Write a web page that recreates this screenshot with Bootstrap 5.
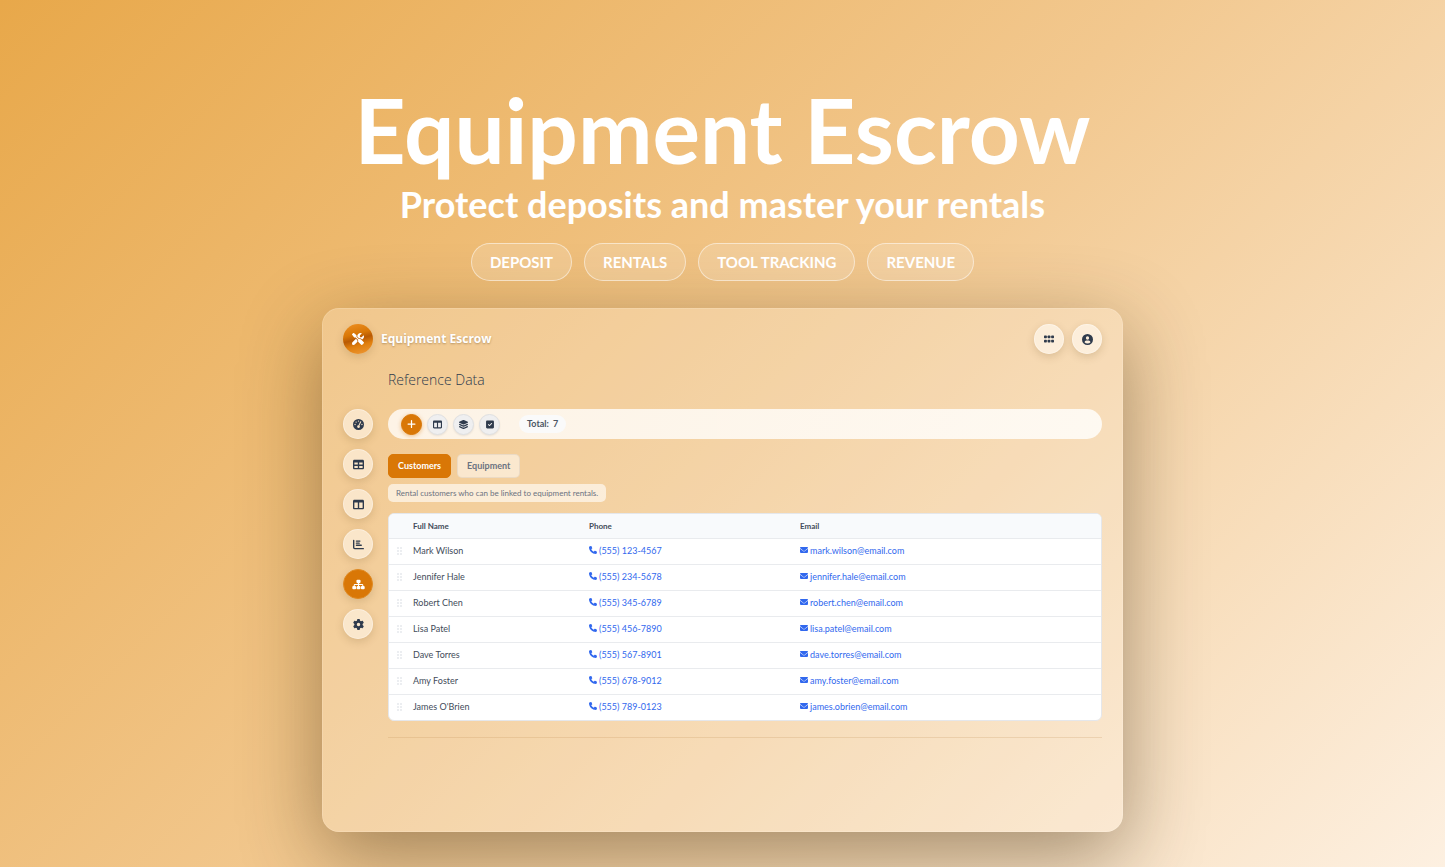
<!DOCTYPE html>
<html lang="en">
<head>
<meta charset="utf-8">
<meta name="viewport" content="width=device-width, initial-scale=1">
<title>Equipment Escrow</title>
<link href="https://cdn.jsdelivr.net/npm/bootstrap@5.3.0/dist/css/bootstrap.min.css" rel="stylesheet">
<style>
  :root { --ink: #2f3b4d; --accent: #d97706; --link: #3168ee; }
  body {
    min-height: 100vh; color: var(--ink); font-family: Lato, "Open Sans", sans-serif; font-size: 9px; line-height: 14px;
    background: linear-gradient(135deg, #e8a84a 0%, #f2c88f 50%, #fdf0e1 100%) no-repeat;
  }
  .hero { padding-top: 77px; color: #fff; }
  .hero h1 { font-size: 89px; line-height: 106px; font-weight: 700; }
  .hero p { font-size: 36px; line-height: 42px; font-weight: 700; }
  .tags { gap: 12px; margin-top: 18px; }
  .tag { height: 38px; padding: 0 18px; border: 1px solid rgba(255,255,255,.5); background: rgba(255,255,255,.16); font-size: 15px; font-weight: 700; }
  .app {
    max-width: 801px; margin-top: 27px; padding: 15px 20px 93px; border: 1px solid rgba(255,255,255,.3); border-radius: 17px;
    background: rgba(255,255,255,.2); background-clip: padding-box; box-shadow: 0 24px 80px rgba(60,40,10,.45);
  }
  .app svg { fill: currentColor; display: block; }
  .round { width: 30px; height: 30px; border-radius: 50%; padding: 0; border: 1px solid rgba(255,255,255,.35); color: var(--ink); background: rgba(255,248,238,.68); box-shadow: 0 3px 8px rgba(90,60,20,.17); display: grid; place-items: center; }
  .side .round { background: rgba(255,248,238,.58); }
  .side .round.current { background: var(--accent); color: #fff; border-color: #e08a22; }
  .logo { background: linear-gradient(165deg, #e98a1c 10%, #d97706 35%, #b85a04 50%, #e07f0e 68%, #ee9a3a 100%); color: #fff; border: 0; }
  .brand { font-family: "Open Sans", sans-serif; font-size: 12px; line-height: 16px; font-weight: 700; color: #fff; text-shadow: 0 1px 2px rgba(80,50,10,.35); }
  .page-title { font-family: "Open Sans", sans-serif; font-size: 14px; line-height: 20px; font-weight: 300; margin: 16px 0 19px; }
  .body-row { gap: 15px; }
  .side { width: 30px; gap: 10px; padding-top: 55px; }
  .toolbar { height: 30px; border-radius: 15px; padding: 0 13px; gap: 5px; background: linear-gradient(to right, rgba(255,250,244,.85), rgba(255,253,249,.88)); }
  .tool { width: 21px; height: 21px; border-radius: 50%; border: 1px solid #dfe0e2; background: #efeff0; color: var(--ink); padding: 0; display: grid; place-items: center; box-shadow: 0 1px 2px rgba(0,0,0,.08); }
  .tool.primary { background: var(--accent); border-color: var(--accent); color: #fff; box-shadow: 0 1px 4px rgba(217,119,6,.45); }
  .total { height: 18px; margin-left: 14px; padding: 0 8px; border-radius: 9px; background: #fafafa; color: #4b5563; }
  .tabs { gap: 6px; margin: 15px 0 6px; }
  .tab { height: 24px; padding: 0 9px; border: 1px solid rgba(225,210,190,.6); border-radius: 5px; background: rgba(255,249,240,.6); color: #6b7280; font-weight: 700; }
  .tab.active { background: var(--accent); border-color: var(--accent); color: #fff; }
  .hint { height: 18px; padding: 0 8px; border-radius: 5px; background: rgba(255,250,244,.68); color: #6b7280; font-size: 8px; }
  .grid-wrap { margin: 11px 0 16px; border: 1px solid #e5e7eb; border-radius: 6px; overflow: hidden; background: #fff; }
  .grid { width: 100%; table-layout: fixed; color: #434c5a; }
  .grid th, .grid td { height: 26px; padding: 0; border-top: 1px solid #e9ebee; vertical-align: middle; white-space: nowrap; }
  .grid thead th { border-top: 0; height: 24px; background: #f8fafc; font-size: 8px; font-weight: 700; }
  .grid a { color: var(--link); text-decoration: none; display: inline-flex; align-items: center; gap: 2px; }
  .grid a svg { margin-bottom: 2px; }
  .grid .grip { color: #eceef1; padding-left: 8px; }
  .c0 { width: 24px; } .c1 { width: 176px; } .c2 { width: 211px; }
  .rule { border-top: 1px solid rgba(190,140,80,.22); }
</style>
</head>
<body>
<svg class="d-none" aria-hidden="true">
  <symbol id="plus" viewBox="0 0 448 512"><path d="M256 80c0-17.700-14.300-32-32-32s-32 14.300-32 32V224H48c-17.700 0-32 14.300-32 32s14.300 32 32 32H192V432c0 17.700 14.300 32 32 32s32-14.300 32-32V288H400c17.700 0 32-14.300 32-32s-14.300-32-32-32H256V80z"/></symbol>
  <symbol id="columns" viewBox="0 0 512 512"><path d="M0 96C0 60.700 28.700 32 64 32H448c35.300 0 64 28.700 64 64V416c0 35.300-28.700 64-64 64H64c-35.300 0-64-28.700-64-64V96zm64 64V416H224V160H64zm384 0H288V416H448V160z"/></symbol>
  <symbol id="cells" viewBox="0 0 512 512"><path d="M64 256V160H224v96H64zm0 64H224v96H64V320zm224 96V320H448v96H288zM448 256H288V160H448v96zM64 32C28.700 32 0 60.700 0 96V416c0 35.300 28.700 64 64 64H448c35.300 0 64-28.700 64-64V96c0-35.300-28.700-64-64-64H64z"/></symbol>
  <symbol id="layers" viewBox="0 0 512 512"><path d="M232.500 5.200c14.900-6.900 32.100-6.900 47 0l218.600 101c8.500 3.900 13.900 12.400 13.900 21.800s-5.400 17.900-13.900 21.800l-218.600 101c-14.900 6.900-32.100 6.900-47 0L13.900 149.800C5.400 145.800 0 137.300 0 128s5.400-17.900 13.900-21.800L232.500 5.200zM48.100 218.400l164.300 75.900c27.700 12.800 59.600 12.800 87.300 0l164.300-75.900 34.100 15.800c8.500 3.900 13.900 12.400 13.900 21.800s-5.400 17.900-13.900 21.800l-218.600 101c-14.900 6.900-32.100 6.900-47 0L13.900 277.800C5.400 273.800 0 265.300 0 256s5.400-17.900 13.900-21.800l34.100-15.800zM13.900 362.200l34.100-15.800 164.300 75.900c27.700 12.800 59.600 12.800 87.300 0l164.300-75.900 34.100 15.800c8.500 3.900 13.900 12.400 13.900 21.800s-5.400 17.900-13.900 21.800l-218.600 101c-14.900 6.900-32.100 6.900-47 0L13.900 405.800C5.400 401.800 0 393.300 0 384s5.400-17.900 13.900-21.800z"/></symbol>
  <symbol id="check" viewBox="0 0 448 512"><path d="M64 32C28.700 32 0 60.700 0 96V416c0 35.300 28.700 64 64 64H384c35.300 0 64-28.700 64-64V96c0-35.300-28.700-64-64-64H64zM337 209L209 337c-9.400 9.400-24.600 9.400-33.900 0l-64-64c-9.400-9.400-9.400-24.600 0-33.900s24.600-9.400 33.900 0l47 47L303 175c9.400-9.400 24.600-9.400 33.900 0s9.400 24.600 0 33.900z"/></symbol>
  <symbol id="phone" viewBox="0 0 512 512"><path d="M164.900 24.600c-7.700-18.600-28-28.500-47.400-23.200l-88 24C12.100 30.200 0 46 0 64C0 311.400 200.600 512 448 512c18 0 33.800-12.100 38.600-29.500l24-88c5.300-19.400-4.600-39.700-23.200-47.400l-96-40c-16.300-6.800-35.200-2.100-46.300 11.600L304.700 368C234.300 334.700 177.300 277.700 144 207.300L193.300 167c13.700-11.200 18.400-30 11.600-46.300l-40-96z"/></symbol>
  <symbol id="mail" viewBox="0 0 512 512"><path d="M48 64C22 64 0 86 0 112q0 24 19 38L237 314q19 14 38 0L493 150q19-14 19-38c0-26-22-48-48-48zM0 176V384q0 64 64 64H448q64 0 64-64V176L294 339q-38 28-76 0z"/></symbol>
  <symbol id="gear" viewBox="0 0 512 512"><path d="M495.900 166.600c3.200 8.700.5 18.400-6.400 24.600l-43.300 39.400c1.100 8.300 1.700 16.800 1.700 25.400s-.6 17.100-1.700 25.400l43.300 39.400c6.900 6.200 9.600 15.900 6.400 24.600c-4.400 11.900-9.700 23.300-15.800 34.300l-4.700 8.100c-6.600 11-14 21.400-22.100 31.200c-5.900 7.200-15.700 9.600-24.500 6.800l-55.700-17.700c-13.400 10.300-28.200 18.900-44 25.400l-12.500 57.100c-2 9.100-9 16.300-18.200 17.800c-13.800 2.300-28 3.500-42.500 3.500s-28.700-1.200-42.500-3.500c-9.200-1.500-16.200-8.700-18.200-17.800l-12.500-57.100c-15.800-6.500-30.600-15.100-44-25.400L83.100 425.900c-8.800 2.800-18.600.3-24.500-6.800c-8.100-9.800-15.500-20.200-22.100-31.200l-4.700-8.100c-6.100-11-11.400-22.400-15.800-34.300c-3.200-8.700-.5-18.400 6.400-24.600l43.300-39.400C64.600 273.100 64 264.600 64 256s.6-17.100 1.700-25.400L22.400 191.200c-6.900-6.200-9.600-15.900-6.400-24.600c4.400-11.900 9.700-23.300 15.800-34.300l4.700-8.100c6.600-11 14-21.400 22.100-31.200c5.900-7.200 15.700-9.600 24.500-6.800l55.700 17.700c13.400-10.300 28.200-18.900 44-25.400l12.500-57.100c2-9.100 9-16.300 18.200-17.800C227.300 1.200 241.500 0 256 0s28.700 1.200 42.500 3.500c9.200 1.500 16.200 8.700 18.200 17.800l12.500 57.100c15.800 6.500 30.600 15.100 44 25.400l55.700-17.700c8.800-2.800 18.600-.3 24.500 6.800c8.100 9.800 15.500 20.200 22.100 31.200l4.700 8.100c6.100 11 11.400 22.400 15.800 34.300zM256 336a80 80 0 1 0 0-160 80 80 0 1 0 0 160z"/></symbol>
  <symbol id="tools" viewBox="0 0 512 512"><path d="M78.600 5C69.100-2.400 55.600-1.500 47 7L7 47c-8.500 8.500-9.400 22-2.100 31.600l80 104c4.500 5.900 11.600 9.400 19 9.400h54.100l109 109c-14.700 29-10 65.400 14.300 89.600l112 112c12.500 12.500 32.800 12.500 45.300 0l64-64c12.500-12.500 12.500-32.800 0-45.300l-112-112c-24.200-24.200-60.600-29-89.600-14.300l-109-109V104c0-7.500-3.500-14.500-9.400-19L78.600 5zM19.900 396.100C7.200 408.800 0 426.100 0 444.100C0 481.600 30.400 512 67.900 512c18 0 35.300-7.200 48-19.900L233.700 374.300c-7.800-20.900-9-43.600-3.600-65.100l-61.700-61.700L19.900 396.100zM512 144c0-10.500-1.100-20.700-3.200-30.500c-2.400-11.200-16.100-14.100-24.200-6l-63.900 63.900c-3 3-7.100 4.700-11.300 4.700H352c-8.800 0-16-7.200-16-16V102.600c0-4.200 1.700-8.300 4.700-11.300l63.900-63.900c8.100-8.100 5.200-21.800-6-24.200C388.700 1.100 378.500 0 368 0C288.500 0 224 64.500 224 144l0 .8 85.300 85.300c36-9.100 75.800.5 104 28.700L429 274.500c49-23 83-72.800 83-130.500z"/></symbol>
  <symbol id="gauge" viewBox="0 0 512 512"><path fill-rule="evenodd" d="M256 0a256 256 0 1 0 0 512A256 256 0 1 0 256 0zM256 64a32 32 0 1 1 0 64 32 32 0 1 1 0-64zM144 112a32 32 0 1 1 0 64 32 32 0 1 1 0-64zM96 224a32 32 0 1 1 0 64 32 32 0 1 1 0-64zM416 224a32 32 0 1 1 0 64 32 32 0 1 1 0-64zM338 122q12-22 32-12 20 12 12 32L300 304q22 24 20 54a64 64 0 1 1-64-72z"/></symbol>
  <symbol id="chart" viewBox="0 0 512 512"><path d="M0 64q0-32 32-32t32 32V400q0 16 16 16H480q32 0 32 32t-32 32H80q-80 0-80-80zM160 64H320q32 0 32 32t-32 32H160q-32 0-32-32t32-32zM160 160H288q32 0 32 32t-32 32H160q-32 0-32-32t32-32zM160 256H384q32 0 32 32t-32 32H160q-32 0-32-32t32-32z"/></symbol>
  <symbol id="sitemap" viewBox="0 0 576 512"><path d="M240 32h96q48 0 48 48v64q0 48-48 48h-24v40h144q56 0 56 56v32h16q48 0 48 48v64q0 48-48 48h-80q-48 0-48-48v-64q0-48 48-48h16v-32q0-8-8-8H312v40h16q48 0 48 48v64q0 48-48 48h-80q-48 0-48-48v-64q0-48 48-48h16v-40H120q-8 0-8 8v32h16q48 0 48 48v64q0 48-48 48H48q-48 0-48-48v-64q0-48 48-48h16v-32q0-56 56-56h144v-40h-24q-48 0-48-48V80q0-48 48-48z"/></symbol>
  <symbol id="apps" viewBox="0 0 14 10"><rect width="4" height="4" rx="1"/><rect x="5" width="4" height="4" rx="1"/><rect x="10" width="4" height="4" rx="1"/><rect y="6" width="4" height="4" rx="1"/><rect x="5" y="6" width="4" height="4" rx="1"/><rect x="10" y="6" width="4" height="4" rx="1"/></symbol>
  <symbol id="user" viewBox="0 0 512 512"><path fill-rule="evenodd" d="M256 0a256 256 0 1 0 0 512A256 256 0 1 0 256 0zM256 110a76 76 0 1 1 0 152 76 76 0 1 1 0-152zM116 380q12-76 88-76h104q76 0 88 76-56 66-140 66t-140-66z"/></symbol>
  <symbol id="grip" viewBox="0 0 5 8"><path d="M0 0h2v2H0zM3 0h2v2H3zM0 3h2v2H0zM3 3h2v2H3zM0 6h2v2H0zM3 6h2v2H3z"/></symbol>
</svg>

<header class="hero text-center">
  <h1 class="mb-0">Equipment Escrow</h1>
  <p class="mb-0">Protect deposits and master your rentals</p>
  <div class="tags d-flex flex-wrap justify-content-center">
    <span class="tag rounded-pill d-flex align-items-center">DEPOSIT</span>
    <span class="tag rounded-pill d-flex align-items-center">RENTALS</span>
    <span class="tag rounded-pill d-flex align-items-center">TOOL TRACKING</span>
    <span class="tag rounded-pill d-flex align-items-center">REVENUE</span>
  </div>
</header>

<main class="app mx-auto">
  <div class="d-flex align-items-center gap-2">
    <span class="round logo"><svg width="12" height="12"><use href="#tools"/></svg></span>
    <span class="brand me-auto">Equipment Escrow</span>
    <button class="round" type="button" aria-label="Apps"><svg width="10" height="8"><use href="#apps"/></svg></button>
    <button class="round" type="button" aria-label="Account"><svg width="11" height="11"><use href="#user"/></svg></button>
  </div>
  <div class="body-row d-flex">
    <nav class="side d-flex flex-column flex-shrink-0" aria-label="Sections">
      <a class="round" href="#dashboard" aria-label="Dashboard"><svg width="11" height="11"><use href="#gauge"/></svg></a>
      <a class="round" href="#tables" aria-label="Tables"><svg width="11" height="11"><use href="#cells"/></svg></a>
      <a class="round" href="#board" aria-label="Board"><svg width="11" height="11"><use href="#columns"/></svg></a>
      <a class="round" href="#reports" aria-label="Reports"><svg width="11" height="11"><use href="#chart"/></svg></a>
      <a class="round current" href="#reference" aria-label="Reference data"><svg width="13" height="11"><use href="#sitemap"/></svg></a>
      <a class="round" href="#settings" aria-label="Settings"><svg width="11" height="11"><use href="#gear"/></svg></a>
    </nav>
    <section class="flex-grow-1">
      <h2 class="page-title">Reference Data</h2>
      <div class="toolbar d-flex align-items-center">
        <button class="tool primary" type="button" aria-label="Add"><svg width="9" height="10"><use href="#plus"/></svg></button>
        <button class="tool" type="button" aria-label="Columns"><svg width="9" height="9"><use href="#columns"/></svg></button>
        <button class="tool" type="button" aria-label="Group"><svg width="9" height="9"><use href="#layers"/></svg></button>
        <button class="tool" type="button" aria-label="Select"><svg width="8" height="9"><use href="#check"/></svg></button>
        <span class="total d-flex align-items-center gap-1 fw-bold"><span>Total:</span><span>7</span></span>
      </div>
      <div class="tabs d-flex align-items-center">
        <button class="tab active" type="button">Customers</button>
        <button class="tab" type="button">Equipment</button>
      </div>
      <div class="d-flex"><span class="hint d-flex align-items-center">Rental customers who can be linked to equipment rentals.</span></div>
      <div class="grid-wrap">
        <table class="grid">
          <colgroup><col class="c0"><col class="c1"><col class="c2"><col></colgroup>
          <thead><tr><th></th><th>Full Name</th><th>Phone</th><th>Email</th></tr></thead>
          <tbody>
            <tr><td class="grip"><svg width="5" height="8"><use href="#grip"/></svg></td><td>Mark Wilson</td><td><a href="tel:5551234567"><svg width="8" height="8"><use href="#phone"/></svg>(555) 123-4567</a></td><td><a href="mailto:mark.wilson@email.com"><svg width="8" height="8"><use href="#mail"/></svg>mark.wilson@email.com</a></td></tr>
            <tr><td class="grip"><svg width="5" height="8"><use href="#grip"/></svg></td><td>Jennifer Hale</td><td><a href="tel:5552345678"><svg width="8" height="8"><use href="#phone"/></svg>(555) 234-5678</a></td><td><a href="mailto:jennifer.hale@email.com"><svg width="8" height="8"><use href="#mail"/></svg>jennifer.hale@email.com</a></td></tr>
            <tr><td class="grip"><svg width="5" height="8"><use href="#grip"/></svg></td><td>Robert Chen</td><td><a href="tel:5553456789"><svg width="8" height="8"><use href="#phone"/></svg>(555) 345-6789</a></td><td><a href="mailto:robert.chen@email.com"><svg width="8" height="8"><use href="#mail"/></svg>robert.chen@email.com</a></td></tr>
            <tr><td class="grip"><svg width="5" height="8"><use href="#grip"/></svg></td><td>Lisa Patel</td><td><a href="tel:5554567890"><svg width="8" height="8"><use href="#phone"/></svg>(555) 456-7890</a></td><td><a href="mailto:lisa.patel@email.com"><svg width="8" height="8"><use href="#mail"/></svg>lisa.patel@email.com</a></td></tr>
            <tr><td class="grip"><svg width="5" height="8"><use href="#grip"/></svg></td><td>Dave Torres</td><td><a href="tel:5555678901"><svg width="8" height="8"><use href="#phone"/></svg>(555) 567-8901</a></td><td><a href="mailto:dave.torres@email.com"><svg width="8" height="8"><use href="#mail"/></svg>dave.torres@email.com</a></td></tr>
            <tr><td class="grip"><svg width="5" height="8"><use href="#grip"/></svg></td><td>Amy Foster</td><td><a href="tel:5556789012"><svg width="8" height="8"><use href="#phone"/></svg>(555) 678-9012</a></td><td><a href="mailto:amy.foster@email.com"><svg width="8" height="8"><use href="#mail"/></svg>amy.foster@email.com</a></td></tr>
            <tr><td class="grip"><svg width="5" height="8"><use href="#grip"/></svg></td><td>James O'Brien</td><td><a href="tel:5557890123"><svg width="8" height="8"><use href="#phone"/></svg>(555) 789-0123</a></td><td><a href="mailto:james.obrien@email.com"><svg width="8" height="8"><use href="#mail"/></svg>james.obrien@email.com</a></td></tr>
          </tbody>
        </table>
      </div>
      <div class="rule"></div>
    </section>
  </div>
</main>
<script src="https://cdn.jsdelivr.net/npm/bootstrap@5.3.0/dist/js/bootstrap.bundle.min.js"></script>
</body>
</html>
